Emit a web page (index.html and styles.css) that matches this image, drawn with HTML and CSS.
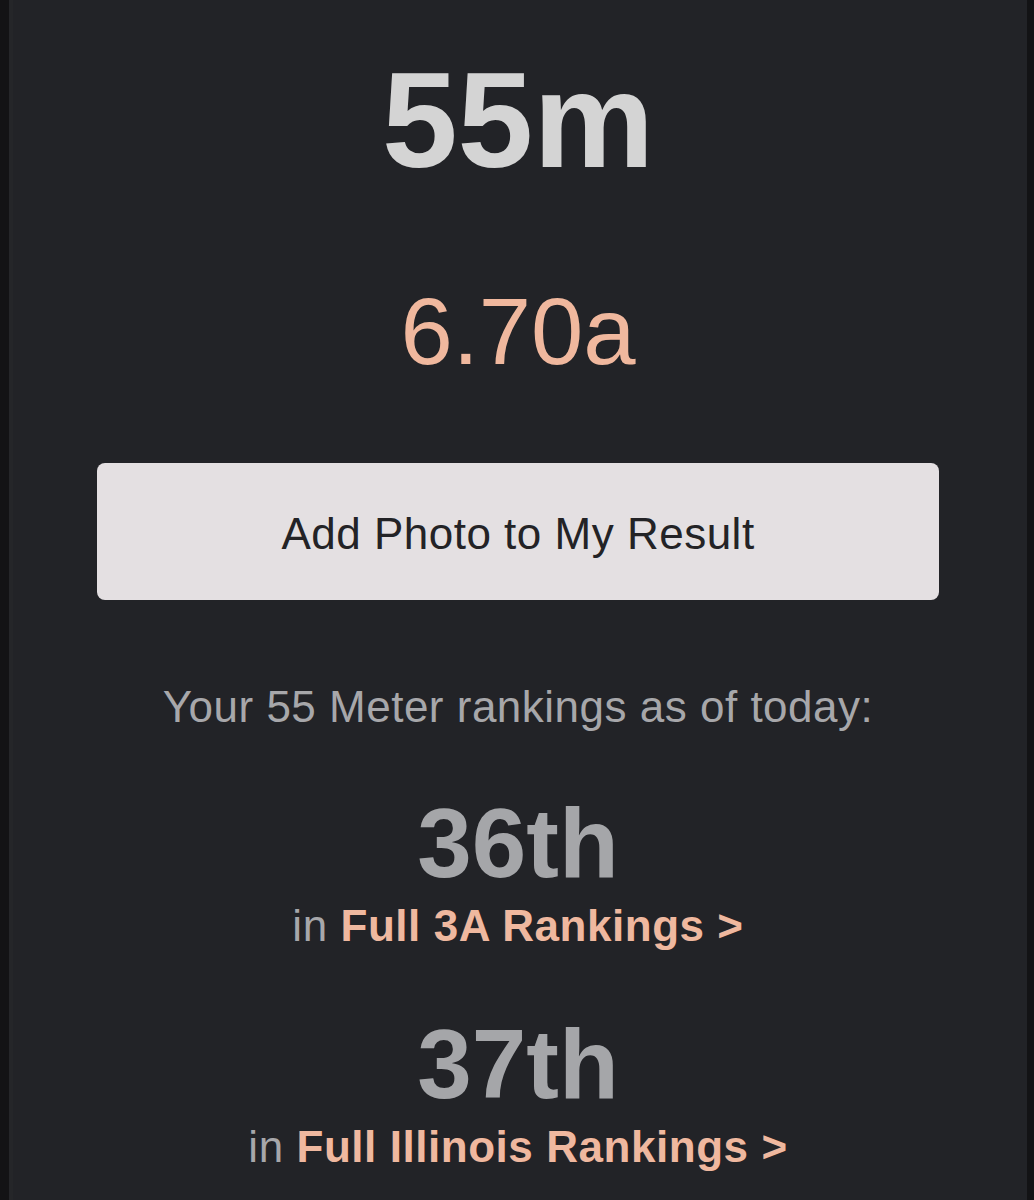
FILE: index.html
```html
<!DOCTYPE html>
<html lang="en">
<head>
<meta charset="UTF-8">
<title>55m result</title>
<link rel="stylesheet" href="styles.css">
</head>
<body>

<div id="page">
	<h1 class="event">55m</h1>
	<p class="mark">6.70a</p>
	<button class="photo-btn" type="button">Add Photo to My Result</button>
	<p class="intro">Your 55 Meter rankings as of today:</p>

	<div class="rank">
		<p class="place">36th</p>
		<p class="where">in <a href="#">Full 3A Rankings &gt;</a></p>
	</div>
	<div class="rank">
		<p class="place">37th</p>
		<p class="where">in <a href="#">Full Illinois Rankings &gt;</a></p>
	</div>
</div>

</body>
</html>
```

FILE: styles.css
```css
*{ margin:0; padding:0; box-sizing:border-box; }
body{
	background:#131315;
	font-family:"Liberation Sans", Arial, Helvetica, sans-serif;
}
#page{
	min-height:1200px;
	background:#222327;
	border-left:9px solid #131315;
	border-right:7px solid #131315;
	box-shadow:inset 4px 0 0 #252629;
	padding:52px 88px 0;
	text-align:center;
}
.event{
	font-size:136px;
	line-height:136px;
	font-weight:bold;
	color:#d4d4d4;
}
.mark{
	margin-top:97px;
	font-size:94px;
	line-height:94px;
	color:#f0b89e;
}
.photo-btn{
	display:block;
	width:100%;
	height:137px;
	margin-top:84px;
	padding-top:4px;
	border:none;
	border-radius:8px;
	background:#e4e0e2;
	color:#232326;
	font-family:inherit;
	font-size:44px;
	line-height:133px;
	letter-spacing:0.5px;
}
.intro{
	margin-top:82px;
	font-size:44px;
	line-height:50px;
	letter-spacing:0.5px;
	color:#a7a7aa;
}
.rank{
	margin-top:61px;
}
.rank + .rank{
	margin-top:63px;
}
.place{
	font-size:98px;
	line-height:100px;
	font-weight:bold;
	color:#a5a6a9;
}
.where{
	margin-top:8px;
	font-size:44px;
	line-height:50px;
	letter-spacing:0.55px;
	color:#a7a7aa;
}
.where a{
	color:#efb89f;
	font-weight:bold;
	text-decoration:none;
}
```
